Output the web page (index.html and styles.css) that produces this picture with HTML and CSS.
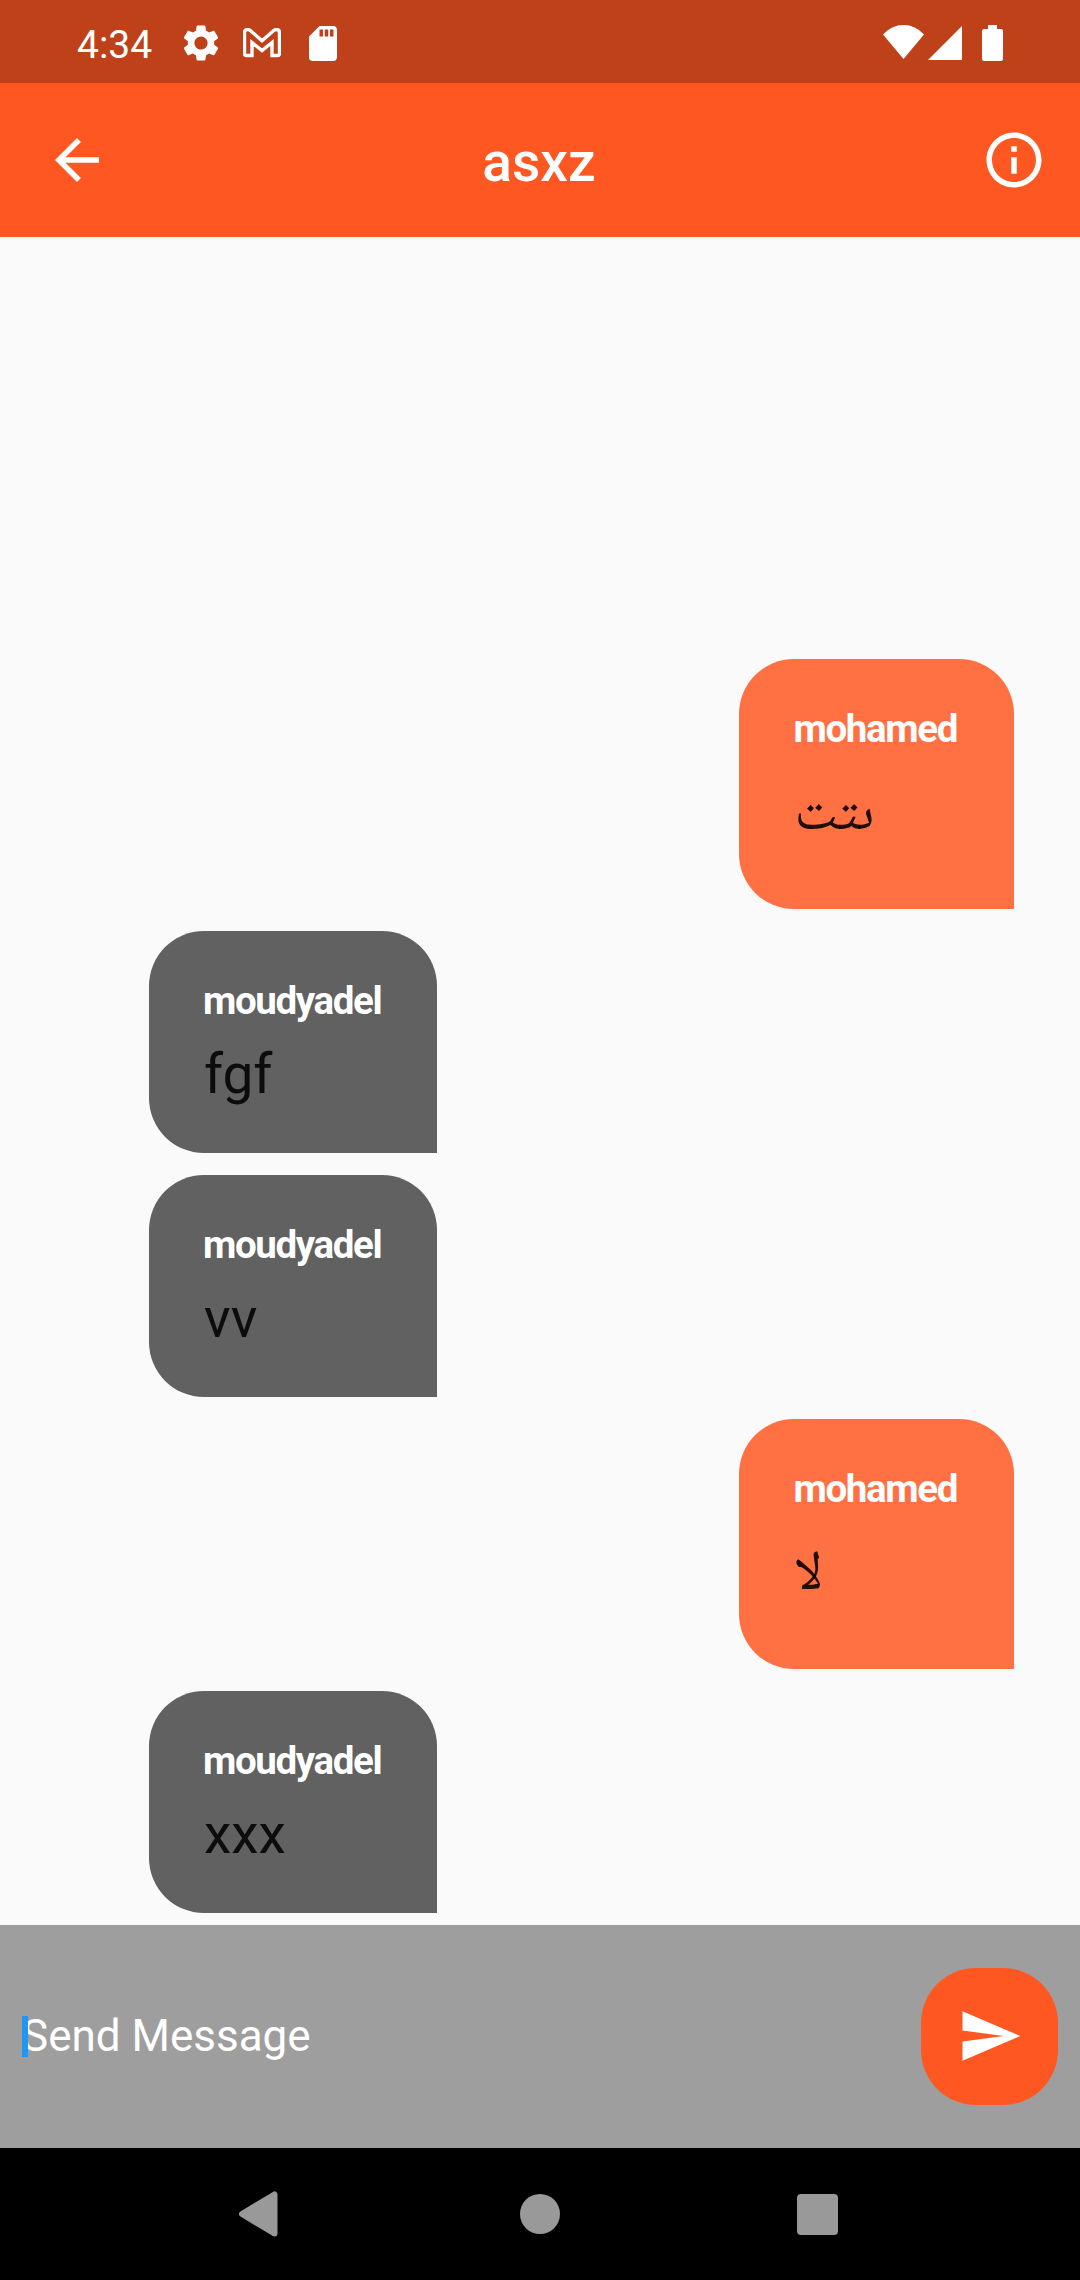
FILE: index.html
```html
<!DOCTYPE html>
<html lang="en">
<head>
<meta charset="utf-8">
<title>asxz</title>
<link rel="stylesheet" href="styles.css">
</head>
<body>
<div class="screen">
  <div class="status-bar">
    <span class="clock">4:34</span>
    <svg class="gear" width="44" height="44" viewBox="0 0 24 24"><path d="M19.14 12.94c.04-.3.06-.61.06-.94 0-.32-.02-.64-.07-.94l2.03-1.58c.18-.14.23-.41.12-.61l-1.92-3.32c-.12-.22-.37-.29-.59-.22l-2.39.96c-.5-.38-1.03-.7-1.62-.94l-.36-2.54c-.04-.24-.24-.41-.48-.41h-3.84c-.24 0-.43.17-.47.41l-.36 2.54c-.59.24-1.13.57-1.62.94l-2.39-.96c-.22-.08-.47 0-.59.22L2.74 8.87c-.12.21-.08.47.12.61l2.03 1.58c-.05.3-.09.63-.09.94s.02.64.07.94l-2.03 1.58c-.18.14-.23.41-.12.61l1.92 3.32c.12.22.37.29.59.22l2.39-.96c.5.38 1.03.7 1.62.94l.36 2.54c.05.24.24.41.48.41h3.84c.24 0 .44-.17.47-.41l.36-2.54c.59-.24 1.13-.56 1.62-.94l2.39.96c.22.08.47 0 .59-.22l1.92-3.32c.12-.22.07-.47-.12-.61l-2.01-1.58zM12 15.6c-1.98 0-3.6-1.62-3.6-3.6s1.62-3.6 3.6-3.6 3.6 1.62 3.6 3.6-1.62 3.6-3.6 3.6z"/></svg>
    <svg class="mail" width="38" height="30" viewBox="0 0 38 30"><path d="M1.5 4.5Q1.5 1.5 4.5 1.5Q6 1.5 7 2.3L19 12.7L31 2.3Q32 1.5 33.5 1.5Q36.5 1.5 36.5 4.5V25.5Q36.5 27.5 34.5 27.5H29V14.5L19 22.6L9 14.5V27.5H3.5Q1.5 27.5 1.5 25.5Z"/></svg>
    <svg class="card" width="28" height="35" viewBox="4 2 16 20"><path d="M18 2h-8L4.02 8 4 20c0 1.1.9 2 2 2h12c1.1 0 2-.9 2-2V4c0-1.1-.9-2-2-2zm-6 6h-2V4h2v4zm3 0h-2V4h2v4zm3 0h-2V4h2v4z"/></svg>
    <span class="spacer"></span>
    <svg class="wifi" width="41" height="34" viewBox="0 0 41 34"><path d="M20.5 34L0 9.5Q8.500 0 20.500 0T41 9.500Z"/></svg>
    <svg class="signal" width="34" height="34" viewBox="0 0 34 34"><path d="M34 0V34H0Z"/></svg>
    <svg class="battery" width="21" height="36" viewBox="0 0 21 36"><path d="M6 0h9v4h4q2 0 2 2v28q0 2-2 2H2q-2 0-2-2V6q0-2 2-2h4z"/></svg>
  </div>

  <header class="app-bar">
    <svg width="66" height="66" viewBox="0 0 24 24"><path d="M20 11H7.830l5.590-5.590L12 4l-8 8 8 8 1.410-1.410L7.830 13H20v-2z"/></svg>
    <h1 class="title">asxz</h1>
    <svg class="info" width="66" height="66" viewBox="0 0 24 24"><path d="M11 7h2v2h-2zm0 4h2v6h-2zm1-9C6.480 2 2 6.480 2 12s4.480 10 10 10 10-4.480 10-10S17.520 2 12 2zm0 18c-4.410 0-8-3.590-8-8s3.590-8 8-8 8 3.590 8 8-3.590 8-8 8z"/></svg>
  </header>

  <main class="messages">
    <article class="bubble mine"><div class="name">mohamed</div><div class="text arabic">ىتت</div></article>
    <article class="bubble theirs"><div class="name">moudyadel</div><div class="text">fgf</div></article>
    <article class="bubble theirs"><div class="name">moudyadel</div><div class="text">vv</div></article>
    <article class="bubble mine"><div class="name">mohamed</div><div class="text arabic">لا</div></article>
    <article class="bubble theirs"><div class="name">moudyadel</div><div class="text">xxx</div></article>
  </main>

  <footer class="composer">
    <div class="field"><span class="hint">Send Message</span><span class="caret"></span></div>
    <div class="send"><svg width="66" height="66" viewBox="0 0 24 24"><path d="M2.010 21L23 12 2.010 3 2 10l15 2-15 2z"/></svg></div>
  </footer>

  <nav class="nav-bar">
    <svg class="nav-back" width="39" height="46" viewBox="0 0 39 46"><path d="M3 23L35.500 3.500V42.500Z"/></svg>
    <span class="nav-home"></span>
    <span class="nav-recent"></span>
  </nav>
</div>
</body>
</html>
```
FILE: styles.css
```css
* { box-sizing: border-box; }

body {
  margin: 0;
  font-family: Roboto, "Noto Naskh Arabic", "Noto Sans Arabic", "DejaVu Sans", sans-serif;
}

svg { display: block; flex: none; fill: #fff; }

.screen {
  display: flex;
  flex-direction: column;
  width: 1080px;
  height: 2280px;
  overflow: hidden;
  background: #fafafa;
}

.status-bar {
  display: flex;
  align-items: flex-start;
  height: 83px;
  flex: none;
  padding: 0 77px 0 77px;
  background: #bf4119;
  color: #fff;
}
.clock { width: 75px; margin-top: 22px; font-size: 39px; line-height: 46px; }
.gear { margin: 21px 0 0 27px; }
.mail { margin: 28px 0 0 20px; }
.mail path { fill: none; stroke: #fff; stroke-width: 3.4; }
.card { margin: 26px 0 0 28px; }
.spacer { flex: 1; }
.wifi { margin: 25px 4px 0 0; }
.signal { margin: 26px 20px 0 0; }
.battery { margin-top: 25px; }

.app-bar {
  display: grid;
  grid-template-columns: 1fr auto 1fr;
  align-items: center;
  height: 154px;
  flex: none;
  padding: 0 33px 0 44px;
  background: #ff5722;
}
.title {
  margin: 4px 13px 0 0;
  color: #fff;
  font-size: 55px;
  font-weight: 500;
  line-height: 64px;
}
.info { justify-self: end; }

.messages {
  display: flex;
  flex: 1;
  flex-direction: column;
  justify-content: flex-end;
  gap: 22px;
  padding: 0 66px 11.3px 148.5px;
}
.bubble {
  flex: none;
  padding: 47px 55px 0 54.500px;
  border-radius: 55px 55px 0 55px;
}
.mine {
  align-self: flex-end;
  width: 275px;
  height: 249.500px;
  background: #ff7043;
}
.theirs {
  align-self: flex-start;
  width: 288.500px;
  height: 222.300px;
  background: #616161;
}
.name {
  color: #fff;
  font-size: 38.500px;
  font-weight: 700;
  line-height: 45px;
  letter-spacing: -1.375px;
  white-space: nowrap;
}
.text {
  margin: 19px 0 0 1px;
  color: rgba(0, 0, 0, .87);
  font-size: 55px;
  line-height: 64px;
}
.arabic { margin-top: 27px; }

.composer {
  display: flex;
  align-items: center;
  justify-content: space-between;
  height: 223.500px;
  flex: none;
  padding: 0 22px;
  background: #9e9e9e;
}
.field { position: relative; color: #fff; font-size: 44px; line-height: 52px; }
.caret {
  position: absolute;
  left: 0;
  top: 6px;
  width: 6px;
  height: 41px;
  background: #2196f3;
}
.send {
  display: flex;
  align-items: center;
  justify-content: center;
  width: 137.500px;
  height: 137.500px;
  padding-left: 1px;
  border-radius: 55px;
  background: #ff5722;
}

.nav-bar {
  display: flex;
  align-items: center;
  height: 132px;
  flex: none;
  padding: 0 242px 0 239px;
  background: #000;
}
.nav-back path { fill: #999; stroke: #999; stroke-width: 6; stroke-linejoin: round; }
.nav-home { width: 40px; height: 40px; margin-left: 242px; border-radius: 50%; background: #999; }
.nav-recent { width: 41px; height: 41px; margin-left: auto; border-radius: 4px; background: #999; }
```
